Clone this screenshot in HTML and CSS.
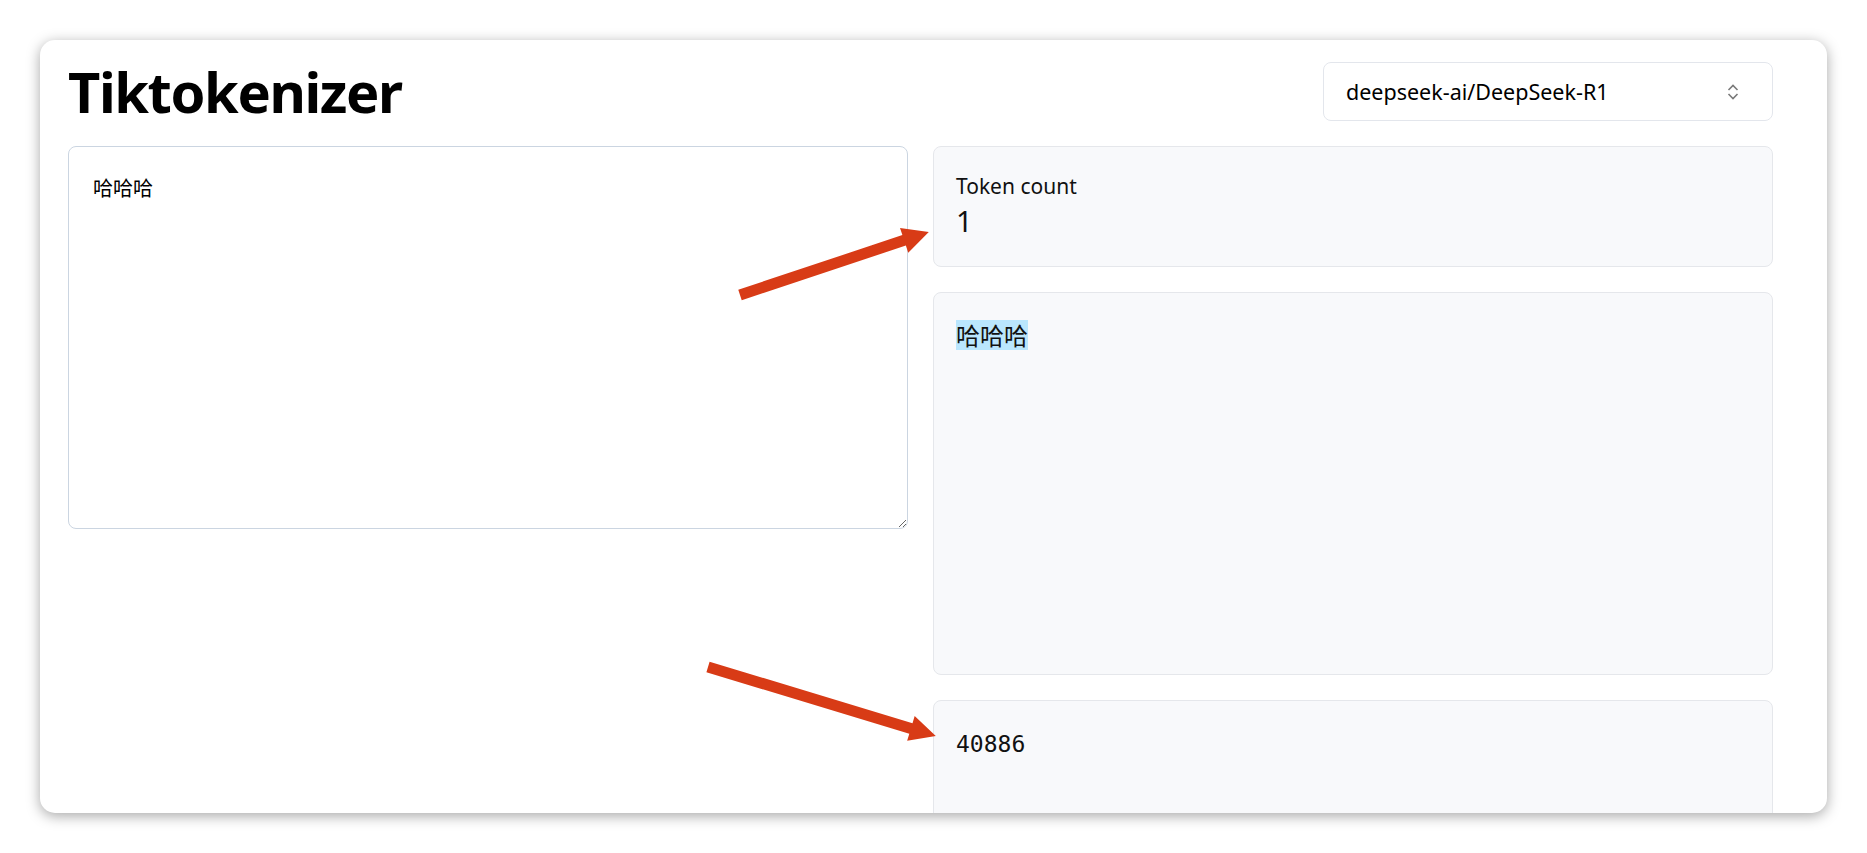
FILE: index.html
```html
<!DOCTYPE html>
<html lang="en">
<head>
    <meta charset="UTF-8">
    <meta name="viewport" content="width=device-width, initial-scale=1.0">
    <title>Tiktokenizer</title>
    <link rel="stylesheet" href="styles.css">
</head>
<body>
    <div id="app-window">
        <header class="top-bar">
            <h1>Tiktokenizer</h1>
            <div class="model-select">
                <span>deepseek-ai/DeepSeek-R1</span>
                <svg class="chevrons" width="14" height="18" viewBox="0 0 14 18">
                    <path d="M2.5 7 L7 2.5 L11.5 7" />
                    <path d="M2.5 11 L7 15.5 L11.5 11" />
                </svg>
            </div>
        </header>

        <div class="workspace">
            <textarea class="input-box">哈哈哈</textarea>

            <div class="results">
                <div class="panel count-panel">
                    <div class="count-label">Token count</div>
                    <div class="count-value">1</div>
                </div>
                <div class="panel tokens-panel">
                    <span class="token">哈哈哈</span>
                </div>
                <div class="panel ids-panel">40886</div>
            </div>
        </div>
    </div>

    <!-- red annotation arrows drawn over the screenshot -->
    <svg class="annotations" width="1867" height="853" viewBox="0 0 1867 853">
        <g transform="translate(740 295) rotate(-18.43)">
            <polygon points="0,-5.5 173,-5.5 173,-13 199,0 173,13 173,5.5 0,5.5" />
        </g>
        <g transform="translate(708 667) rotate(16.84)">
            <polygon points="0,-5.5 212,-5.5 212,-13 238,0 212,13 212,5.5 0,5.5" />
        </g>
    </svg>
</body>
</html>
```

FILE: styles.css
```css
body {
    font-family: 'Noto Sans', 'Noto Sans CJK SC', sans-serif;
    margin: 0;
    padding: 40px;
    background-color: #ffffff;
    color: #111;
}

#app-window {
    width: 1787px;
    height: 773px;
    box-sizing: border-box;
    padding: 22px 54px 0 28px;
    background-color: #ffffff;
    border-radius: 15px;
    box-shadow: 0 3px 14px rgba(0, 0, 0, 0.35);
    overflow: hidden;
}

.top-bar {
    display: flex;
    justify-content: space-between;
    align-items: center;
    margin-bottom: 25px;
}

.top-bar h1 {
    margin: 0;
    font-size: 56px;
    font-weight: 700;
    line-height: 59px;
    letter-spacing: -1.4px;
    color: #000;
}

.model-select {
    width: 450px;
    height: 59px;
    box-sizing: border-box;
    display: flex;
    align-items: center;
    justify-content: space-between;
    padding: 0 32px 0 22px;
    border: 1px solid #e3e6ec;
    border-radius: 8px;
    font-size: 21.5px;
    color: #000;
}

.chevrons path {
    fill: none;
    stroke: #7a7a7a;
    stroke-width: 1.6;
}

.workspace {
    display: grid;
    grid-template-columns: 1fr 1fr;
    gap: 25px;
    align-items: start;
}

.input-box {
    height: 383px;
    box-sizing: border-box;
    padding: 26px 24px;
    border: 1px solid #cbd5e1;
    border-radius: 8px;
    font-family: 'Noto Sans CJK SC', sans-serif;
    font-size: 20px;
    line-height: 30px;
    color: #000;
    resize: vertical;
}

.results {
    display: flex;
    flex-direction: column;
    gap: 25px;
}

.panel {
    box-sizing: border-box;
    padding: 24px 22px;
    background-color: #f8f9fb;
    border: 1px solid #e5e7eb;
    border-radius: 8px;
}

.count-panel {
    height: 121px;
    padding-top: 24px;
}

.count-label {
    font-size: 21px;
    line-height: 30px;
}

.count-value {
    font-size: 29px;
    line-height: 40px;
}

.tokens-panel {
    height: 383px;
    padding-top: 27px;
}

.token {
    display: inline-block;
    height: 30px;
    line-height: 30px;
    background-color: #bae6fd;
    font-family: 'Noto Sans CJK SC', sans-serif;
    font-size: 24px;
}

.ids-panel {
    height: 200px;
    padding-top: 28px;
    font-family: 'DejaVu Sans Mono', monospace;
    font-size: 23px;
    line-height: 30px;
}

.annotations {
    position: absolute;
    top: 0;
    left: 0;
    pointer-events: none;
}

.annotations polygon {
    fill: #d83b16;
}
```
